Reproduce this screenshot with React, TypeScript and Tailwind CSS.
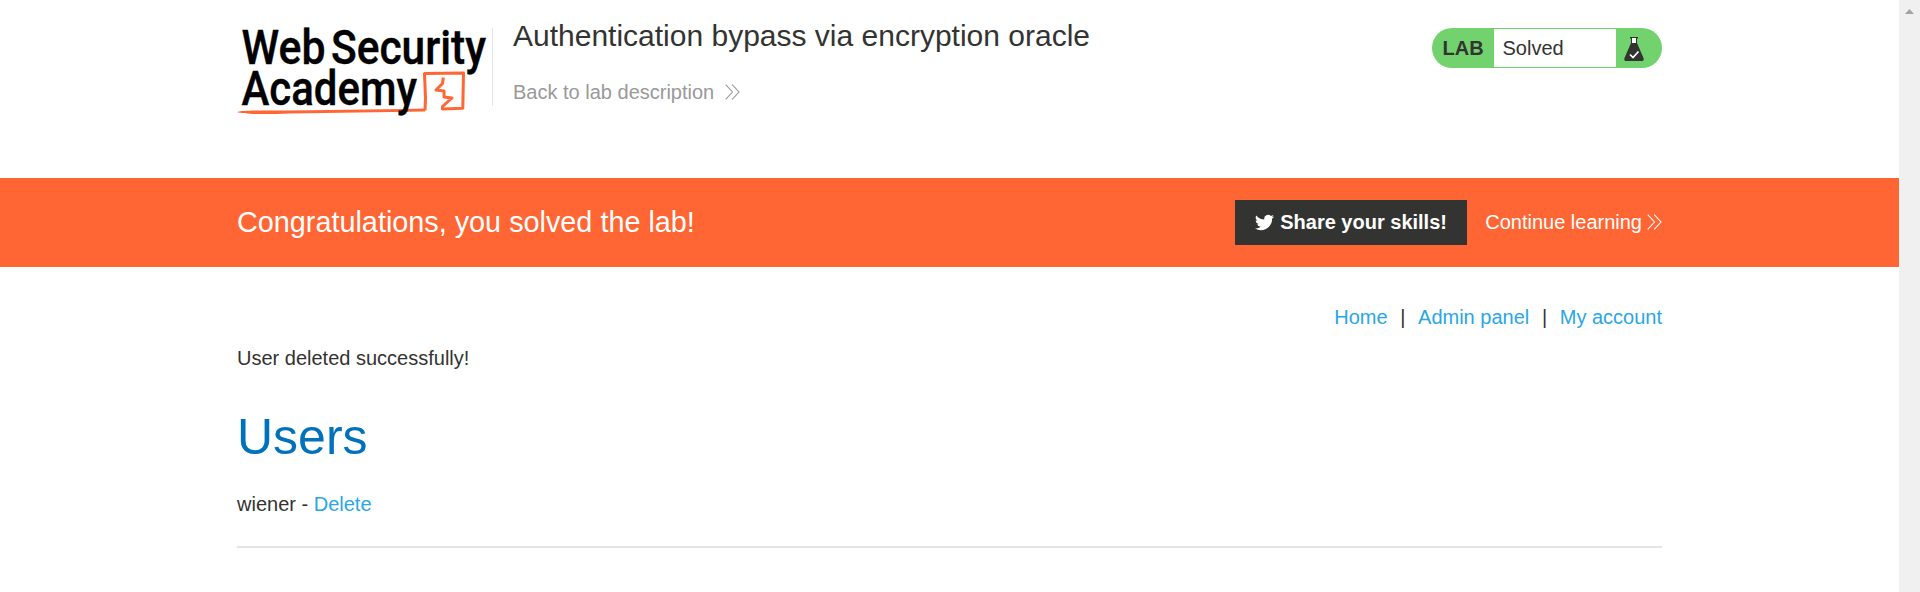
import React from "react";

function Logo() {
  return (
    <svg width="256" height="110" viewBox="237 10 256 110" className="block shrink-0" fill="none">
      <g fill="#000" stroke="#000" strokeWidth="0.4" fontFamily="Roboto, sans-serif" fontWeight="500" fontSize="47.5">
        <text x="241.5" y="64.3" textLength="84" lengthAdjust="spacingAndGlyphs">Web</text>
        <text x="331" y="64.3" textLength="155" lengthAdjust="spacingAndGlyphs">Security</text>
      </g>
      <path d="M237 112 C244 110 260 110.500 290 110.500 L405 109 L425 108.500 L425 111.500 L290 113.500 C265 114.500 245 114.500 237 112Z" fill="#ff6633" />
      <path d="M425 110.500 L425.500 98 L424.500 73.500 L463.500 73 L462.800 108.300 L442.500 109 L442.500 106.500 L452 98 L444 97 L444 91 L436 90 L442.500 83.500 L443.300 77.500" stroke="#ff6633" strokeWidth="3" strokeLinejoin="round" />
      <text x="241.500" y="105.3" textLength="175.500" lengthAdjust="spacingAndGlyphs" fill="#000" stroke="#000" strokeWidth="0.4" fontFamily="Roboto, sans-serif" fontWeight="500" fontSize="47.5">Academy</text>
    </svg>
  );
}

function Chevrons() {
  return (
    <svg width="15" height="16" viewBox="0 0 15 16" fill="none" stroke="currentColor" strokeWidth="1.1" className="shrink-0">
      <path d="M.7.7 7.500 8 .7 15.300M7.200.7 14 8 7.200 15.300" />
    </svg>
  );
}

function Flask() {
  return (
    <svg width="20" height="26" viewBox="0 0 20 26">
      <path d="M6 1h8v1.500h-1V7l6.500 15c.7 2-.2 3-1.500 3H2c-1.300 0-2.200-1-1.500-3L7 7V2.500H6z" fill="#333332" />
      <path d="M8 2h4v5H8z" fill="#fff" />
      <path d="M6 18.500 9 21.500 14.500 15.500" fill="none" stroke="#fff" strokeWidth="1.700" />
    </svg>
  );
}

function Twitter() {
  return (
    <svg width="19" height="19" viewBox="0 0 24 24" fill="#fff" className="shrink-0">
      <path d="M23.950 4.570a10 10 0 0 1-2.820.77 4.960 4.960 0 0 0 2.160-2.720 9.900 9.900 0 0 1-3.120 1.180 4.920 4.920 0 0 0-8.380 4.480A13.930 13.930 0 0 1 1.640 3.160a4.920 4.920 0 0 0 1.520 6.570 4.900 4.900 0 0 1-2.230-.61v.06a4.920 4.920 0 0 0 3.950 4.830 5 5 0 0 1-2.210.08 4.940 4.940 0 0 0 4.600 3.420A9.870 9.870 0 0 1 0 19.540a13.940 13.940 0 0 0 7.550 2.210c9.050 0 14-7.500 14-13.980 0-.21 0-.42-.02-.63a9.940 9.940 0 0 0 2.460-2.550z" />
    </svg>
  );
}

export default function App() {
  return (
    <div className="flex h-[592px] w-full overflow-hidden bg-white font-['Liberation_Sans',Arial,sans-serif] text-[20px] leading-[30px] text-[#333332]">
      <div className="min-w-0 flex-1">
        <header className="mx-auto flex h-[178px] w-[1425px] items-start">
          <div className="pt-[10px]"><Logo /></div>
          <div className="-ml-px mt-7 h-[78px] w-px bg-[#e4e4e4]" />
          <div className="flex flex-1 flex-col pl-5 pt-[18px]">
            <h2 className="text-[30px] leading-9">Authentication bypass via encryption oracle</h2>
            <a className="mt-[23px] flex items-center gap-[11px] text-[#999]">
              Back to lab description <Chevrons />
            </a>
          </div>
          <div className="mt-7 flex h-10 w-[230px] overflow-hidden rounded-[20px] bg-[#72d36e] py-px">
            <div className="flex w-[62px] items-center pl-[10.5px] font-bold">LAB</div>
            <div className="flex w-[122px] items-center bg-white pl-[8.500px]">Solved</div>
            <div className="flex flex-1 items-center pl-2 pt-px"><Flask /></div>
          </div>
        </header>
        <section className="h-[89px] bg-[#ff6633] text-white">
          <div className="mx-auto flex h-full w-[1425px] items-center">
            <h4 className="flex-1 pb-[2px] text-[28.800px]">Congratulations, you solved the lab!</h4>
            <button className="flex h-[45px] w-[232px] items-center gap-[6px] bg-[#333332] pb-px pl-5 font-bold">
              <Twitter /> Share your skills!
            </button>
            <a className="ml-[18px] flex items-center gap-[5px] pb-px">Continue learning <Chevrons /></a>
          </div>
        </section>
        <main className="mx-auto w-[1425px] pt-[35px]">
          <nav className="flex justify-end text-[#29a7e5]">
            <a>Home</a>
            <span className="w-[30.500px] text-center text-[#333332]">|</span>
            <a>Admin panel</a>
            <span className="w-[30.500px] text-center text-[#333332]">|</span>
            <a>My account</a>
          </nav>
          <p className="mt-[11px]">User deleted successfully!</p>
          <h1 className="mt-[34px] text-[50px] leading-[60px] text-[#0071bd]">Users</h1>
          <div className="mt-[22px]">wiener - <a className="text-[#29a7e5]">Delete</a></div>
          <hr className="mt-[27px] h-[2px] border-0 bg-[#e4e4e4]" />
        </main>
      </div>
      <aside className="flex w-[21px] shrink-0 justify-center bg-[#f0f0f0] pt-[9px]">
        <svg width="9" height="5" viewBox="0 0 9 5"><path d="M0 5 4.500 0 9 5z" fill="#a3a3a3" /></svg>
      </aside>
    </div>
  );
}
